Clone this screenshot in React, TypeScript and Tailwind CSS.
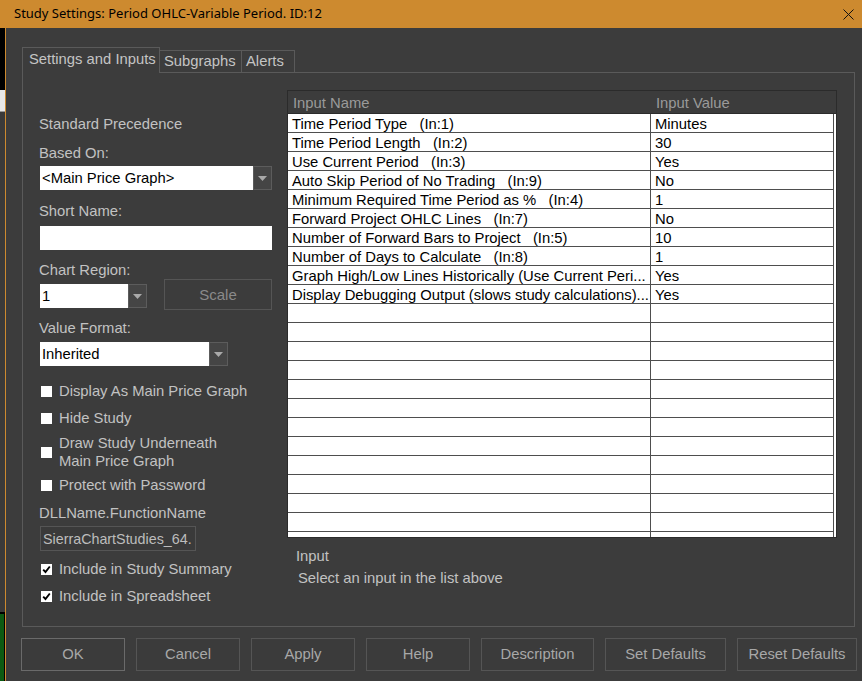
import React from "react";

const rows: [string, string][] = [
  ["Time Period Type   (In:1)", "Minutes"],
  ["Time Period Length   (In:2)", "30"],
  ["Use Current Period   (In:3)", "Yes"],
  ["Auto Skip Period of No Trading   (In:9)", "No"],
  ["Minimum Required Time Period as %   (In:4)", "1"],
  ["Forward Project OHLC Lines   (In:7)", "No"],
  ["Number of Forward Bars to Project   (In:5)", "10"],
  ["Number of Days to Calculate   (In:8)", "1"],
  ["Graph High/Low Lines Historically (Use Current Peri...", "Yes"],
  ["Display Debugging Output (slows study calculations)...", "Yes"],
];

const allRows: [string, string][] = [
  ...rows,
  ...Array.from({ length: 13 }, () => ["", ""] as [string, string]),
];

function Arrow() {
  return (
    <svg width="9" height="5" viewBox="0 0 9 5">
      <polygon points="0,0 9,0 4.5,5" fill="#a9a9a9" />
    </svg>
  );
}

function Select({ value, whiteW }: { value: string; whiteW: string }) {
  return (
    <div className="flex h-[24px] ml-px">
      <div className={`${whiteW} bg-white text-black flex items-center pl-[2px] text-[14.8px] leading-[16px]`}>
        {value}
      </div>
      <div className="w-[19px] bg-[#454545] border border-[#5c5c5c] flex items-center justify-center">
        <Arrow />
      </div>
    </div>
  );
}

function Check({ checked, children }: { checked?: boolean; children: React.ReactNode }) {
  return (
    <div className="flex items-center ml-[2px]">
      <div className="w-[11px] h-[11px] bg-white flex items-center justify-center shrink-0">
        {checked && (
          <svg width="9" height="9" viewBox="0 0 9 9">
            <polyline points="1.2,4.6 3.5,7 7.8,1.5" fill="none" stroke="#000" strokeWidth="1.9" />
          </svg>
        )}
      </div>
      <div className="ml-[7px] text-[14.8px] leading-[18px]">{children}</div>
    </div>
  );
}

function Btn({ w, children, primary }: { w: string; children: React.ReactNode; primary?: boolean }) {
  return (
    <div
      className={`${w} h-[33px] flex items-center justify-center text-[14.8px] text-[#a8a8a8] bg-[#3b3b3b] border ${
        primary ? "border-[#6a6a6a]" : "border-[#555555]"
      }`}
    >
      {children}
    </div>
  );
}

export default function App() {
  return (
    <div
      className="w-[862px] h-[681px] overflow-hidden bg-[#3c3c3c] flex flex-col text-[#c2c2c2]"
      style={{ fontFamily: '"Liberation Sans", Arial, sans-serif' }}
    >
      {/* Title bar */}
      <div
        className="h-[28px] shrink-0 bg-[#cd8a2f] flex items-center pl-[14px] pr-[8px] text-black text-[13px]"
        style={{ fontFamily: '"Noto Sans", "Open Sans", sans-serif' }}
      >
        <span className="flex-1">Study Settings: Period OHLC-Variable Period. ID:12</span>
        <svg width="11" height="11" viewBox="0 0 11 11">
          <line x1="0.5" y1="0.5" x2="10.5" y2="10.5" stroke="#111" strokeWidth="1" />
          <line x1="10.5" y1="0.5" x2="0.5" y2="10.5" stroke="#111" strokeWidth="1" />
        </svg>
      </div>

      <div className="flex flex-1 min-h-0">
        {/* background window sliver */}
        <div className="w-[5px] flex flex-col shrink-0">
          <div className="h-[62px] bg-black" />
          <div className="h-[22px] bg-[#e8e8e8] border-b border-[#999]" />
          <div className="h-[500px] bg-[#3a3a3a]" />
          <div className="h-[2px] bg-black" />
          <div className="flex-1 bg-[#0c5a12] border-r border-black" />
        </div>
        <div className="w-px bg-[#cd8a2f] shrink-0" />

        {/* Dialog body */}
        <div className="flex-1 flex flex-col pl-[16px] pt-[19px]">
          {/* Tabs */}
          <div className="flex items-end h-[25px] text-[14.8px] leading-[16px]">
            <div className="relative z-10 -mb-px h-[26px] w-[138px] bg-[#3c3c3c] border border-b-0 border-[#5a5a5a] pl-[6px] pt-[3px] text-[#c4c4c4] whitespace-nowrap">
              Settings and Inputs
            </div>
            <div className="h-[22px] w-[82px] border-t border-r border-[#5a5a5a] pl-[4px] pt-[2px] text-[#c4c4c4]">
              Subgraphs
            </div>
            <div className="h-[22px] w-[53px] border-t border-r border-[#5a5a5a] pl-[4px] pt-[2px] text-[#c4c4c4]">
              Alerts
            </div>
          </div>

          {/* Panel */}
          <div className="w-[833px] h-[555px] border border-[#5a5a5a] flex shrink-0">
            {/* Left column */}
            <div className="w-[264px] shrink-0 pl-[16px] pt-[43px] flex flex-col text-[14.8px] leading-[16px]">
              <div>Standard Precedence</div>
              <div className="mt-[13px]">Based On:</div>
              <div className="mt-[5px]">
                <Select value="<Main Price Graph>" whiteW="w-[213px]" />
              </div>
              <div className="mt-[13px]">Short Name:</div>
              <div className="mt-[7px] ml-px w-[232px] h-[24px] bg-white" />
              <div className="mt-[12px]">Chart Region:</div>
              <div className="mt-[1px] flex items-start h-[31px]">
                <div className="mt-[5px]">
                  <Select value="1" whiteW="w-[88px]" />
                </div>
                <div className="ml-[17px] w-[108px] h-[31px] border border-[#555555] flex items-center justify-center text-[#8a8a8a] text-[15px]">
                  Scale
                </div>
              </div>
              <div className="mt-[10px]">Value Format:</div>
              <div className="mt-[6px]">
                <Select value="Inherited" whiteW="w-[169px]" />
              </div>
              <div className="mt-[16px]">
                <Check>Display As Main Price Graph</Check>
              </div>
              <div className="mt-[9px]">
                <Check>Hide Study</Check>
              </div>
              <div className="mt-[7px]">
                <Check>
                  Draw Study Underneath
                  <br />
                  Main Price Graph
                </Check>
              </div>
              <div className="mt-[6px]">
                <Check>Protect with Password</Check>
              </div>
              <div className="mt-[11px]">DLLName.FunctionName</div>
              <div className="mt-[5px] ml-px w-[156px] h-[25px] border border-[#555555] bg-[#3a3a3a] flex items-center pl-[2px] text-[14.3px] text-[#bdbdbd] overflow-hidden whitespace-nowrap">
                SierraChartStudies_64.
              </div>
              <div className="mt-[9px]">
                <Check checked>Include in Study Summary</Check>
              </div>
              <div className="mt-[9px]">
                <Check checked>Include in Spreadsheet</Check>
              </div>
            </div>

            {/* Right column */}
            <div className="flex-1 pt-[17px] flex flex-col text-[14.8px] leading-[16px]">
              <div className="w-[550px] border border-[#2b2b2b] flex flex-col">
                <div className="h-[23px] border-b border-[#2b2b2b] flex items-center pt-px text-[#9a9a9a]">
                  <div className="w-[364px] pl-[5px]">Input Name</div>
                  <div className="pl-[4px]">Input Value</div>
                </div>
                <div className="h-[423px] bg-white overflow-hidden pr-[2px]">
                  {allRows.map(([n, v], i) => (
                    <div key={i} className="h-[19px] flex border-b border-[#4e4e4e] text-black">
                      <div className="w-[363px] border-r border-[#4e4e4e] pl-[4px] pt-px flex items-center whitespace-pre overflow-hidden">
                        {n}
                      </div>
                      <div className="flex-1 border-r border-[#4e4e4e] pl-[4px] pt-px flex items-center">{v}</div>
                    </div>
                  ))}
                </div>
              </div>
              <div className="mt-[10px] pl-[9px]">Input</div>
              <div className="mt-[6px] pl-[11px]">Select an input in the list above</div>
            </div>
          </div>

          {/* Buttons */}
          <div className="mt-[11px] flex gap-[11px] -ml-[1px]">
            <Btn w="w-[104px]" primary>
              OK
            </Btn>
            <Btn w="w-[104px]">Cancel</Btn>
            <Btn w="w-[104px]">Apply</Btn>
            <Btn w="w-[104px]">Help</Btn>
            <Btn w="w-[113px]">Description</Btn>
            <Btn w="w-[121px]">Set Defaults</Btn>
            <Btn w="w-[120px]">Reset Defaults</Btn>
          </div>
        </div>
      </div>
    </div>
  );
}
